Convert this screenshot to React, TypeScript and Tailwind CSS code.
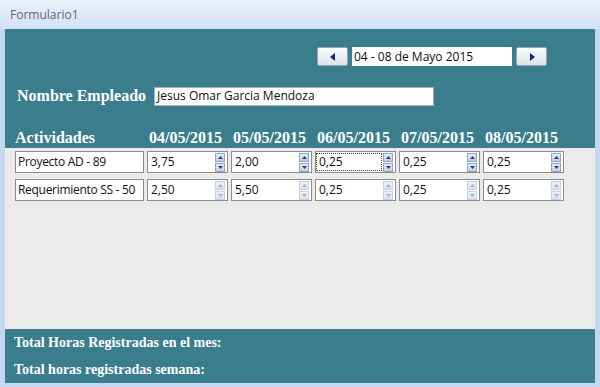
import React from "react";

const dates = ["04/05/2015", "05/05/2015", "06/05/2015", "07/05/2015", "08/05/2015"];

const rows = [
  { name: "Proyecto AD - 89", values: ["3,75", "2,00", "0,25", "0,25", "0,25"], active: true },
  { name: "Requerimiento SS - 50", values: ["2,50", "5,50", "0,25", "0,25", "0,25"], active: false },
];

function NavButton({ dir }: { dir: "left" | "right" }) {
  return (
    <div className="flex h-[19px] w-[31px] items-center justify-center rounded-[2px] border border-[#9aa6b4] bg-gradient-to-b from-[#fbfcfd] to-[#dde3ea]">
      <svg width="6" height="8" viewBox="0 0 6 8">
        {dir === "left" ? <path d="M5 0 L0 4 L5 8 Z" fill="#16237a" /> : <path d="M1 0 L6 4 L1 8 Z" fill="#16237a" />}
      </svg>
    </div>
  );
}

function Spinner({ active }: { active: boolean }) {
  const box = active
    ? "border-[#8ea6c6] bg-gradient-to-b from-[#e4edf8] to-[#bccfe6]"
    : "border-[#c5d2e2] bg-gradient-to-b from-[#eef2f8] to-[#d9e3ef]";
  const fill = active ? "#2a3f72" : "#a3b3c9";
  return (
    <div className="flex flex-col gap-[1px] py-[1px]">
      <div className={`flex h-[9px] w-[10px] items-center justify-center border ${box}`}>
        <svg width="5" height="3" viewBox="0 0 5 3">
          <path d="M0 3 L2.5 0 L5 3 Z" fill={fill} />
        </svg>
      </div>
      <div className={`flex h-[9px] w-[10px] items-center justify-center border ${box}`}>
        <svg width="5" height="3" viewBox="0 0 5 3">
          <path d="M0 0 L2.5 3 L5 0 Z" fill={fill} />
        </svg>
      </div>
    </div>
  );
}

function NumberField({ value, active, focused }: { value: string; active: boolean; focused?: boolean }) {
  return (
    <div className="flex h-[22px] w-[81px] items-center justify-between border border-[#8c8c8c] bg-white pr-[2px]">
      <div
        className={`flex h-[18px] w-[66px] items-center pl-[2px] text-[12px] leading-none text-[#111] ${
          focused ? "border border-dotted border-[#444]" : "ml-[1px]"
        }`}
      >
        {value}
      </div>
      <Spinner active={active} />
    </div>
  );
}

export default function App() {
  const serif = { fontFamily: '"Liberation Serif", "DejaVu Serif", serif' };
  return (
    <div
      className="flex h-[387px] w-[600px] flex-col bg-[#c3d7f0]"
      style={{ fontFamily: '"Open Sans", "Noto Sans", sans-serif' }}
    >
      {/* title bar */}
      <div className="flex h-[29px] items-center bg-gradient-to-b from-[#e9f0fa] to-[#d3e2f5] pl-[10px] text-[12px] text-[#5a6780]">
        Formulario1
      </div>

      <div className="flex flex-1 flex-col pl-[5px] pr-[5px] pb-[4px]">
        {/* header section */}
        <div className="flex h-[119px] flex-col bg-[#3a7e8e] text-white" style={serif}>
          <div className="flex items-center gap-[4px] pl-[312px] pt-[18px]">
            <NavButton dir="left" />
            <div
              className="flex h-[19px] w-[160px] items-center bg-white pl-[2px] text-[12px] text-[#111]"
              style={{ fontFamily: '"Open Sans", "Noto Sans", sans-serif' }}
            >
              04 - 08 de Mayo 2015
            </div>
            <NavButton dir="right" />
          </div>

          <div className="flex items-center pl-[12px] pt-[18px]">
            <span className="w-[137px] text-[16px] font-bold">Nombre Empleado</span>
            <div
              className="flex h-[19px] w-[280px] items-center border border-[#9fb3bb] bg-white pl-[2px] text-[12px] text-[#111]"
              style={{ fontFamily: '"Open Sans", "Noto Sans", sans-serif' }}
            >
              Jesus Omar Garcia Mendoza
            </div>
          </div>

          <div className="flex items-center pl-[10px] pt-[22px] text-[16px] font-bold leading-none">
            <span className="w-[132px]">Actividades</span>
            {dates.map((d) => (
              <span key={d} className="w-[84px] pl-[2px]">
                {d}
              </span>
            ))}
          </div>
        </div>

        {/* detail section */}
        <div className="flex flex-1 flex-col gap-[6px] bg-[#ebebeb] pl-[10px] pt-[3px]">
          {rows.map((r, ri) => (
            <div key={r.name} className="flex gap-[3px]">
              <div className="flex h-[22px] w-[129px] items-center overflow-hidden whitespace-nowrap border border-[#8c8c8c] bg-white pl-[2px] text-[12px] tracking-[-0.3px] text-[#111]">
                {r.name}
              </div>
              {r.values.map((v, i) => (
                <NumberField key={i} value={v} active={r.active} focused={ri === 0 && i === 2} />
              ))}
            </div>
          ))}
        </div>

        {/* footer */}
        <div
          className="flex h-[54px] flex-col justify-center gap-[13px] bg-[#3a7e8e] pl-[9px] text-[14px] font-bold leading-none text-white"
          style={serif}
        >
          <span>Total Horas Registradas en el mes:</span>
          <span>Total horas registradas semana:</span>
        </div>
      </div>
    </div>
  );
}
